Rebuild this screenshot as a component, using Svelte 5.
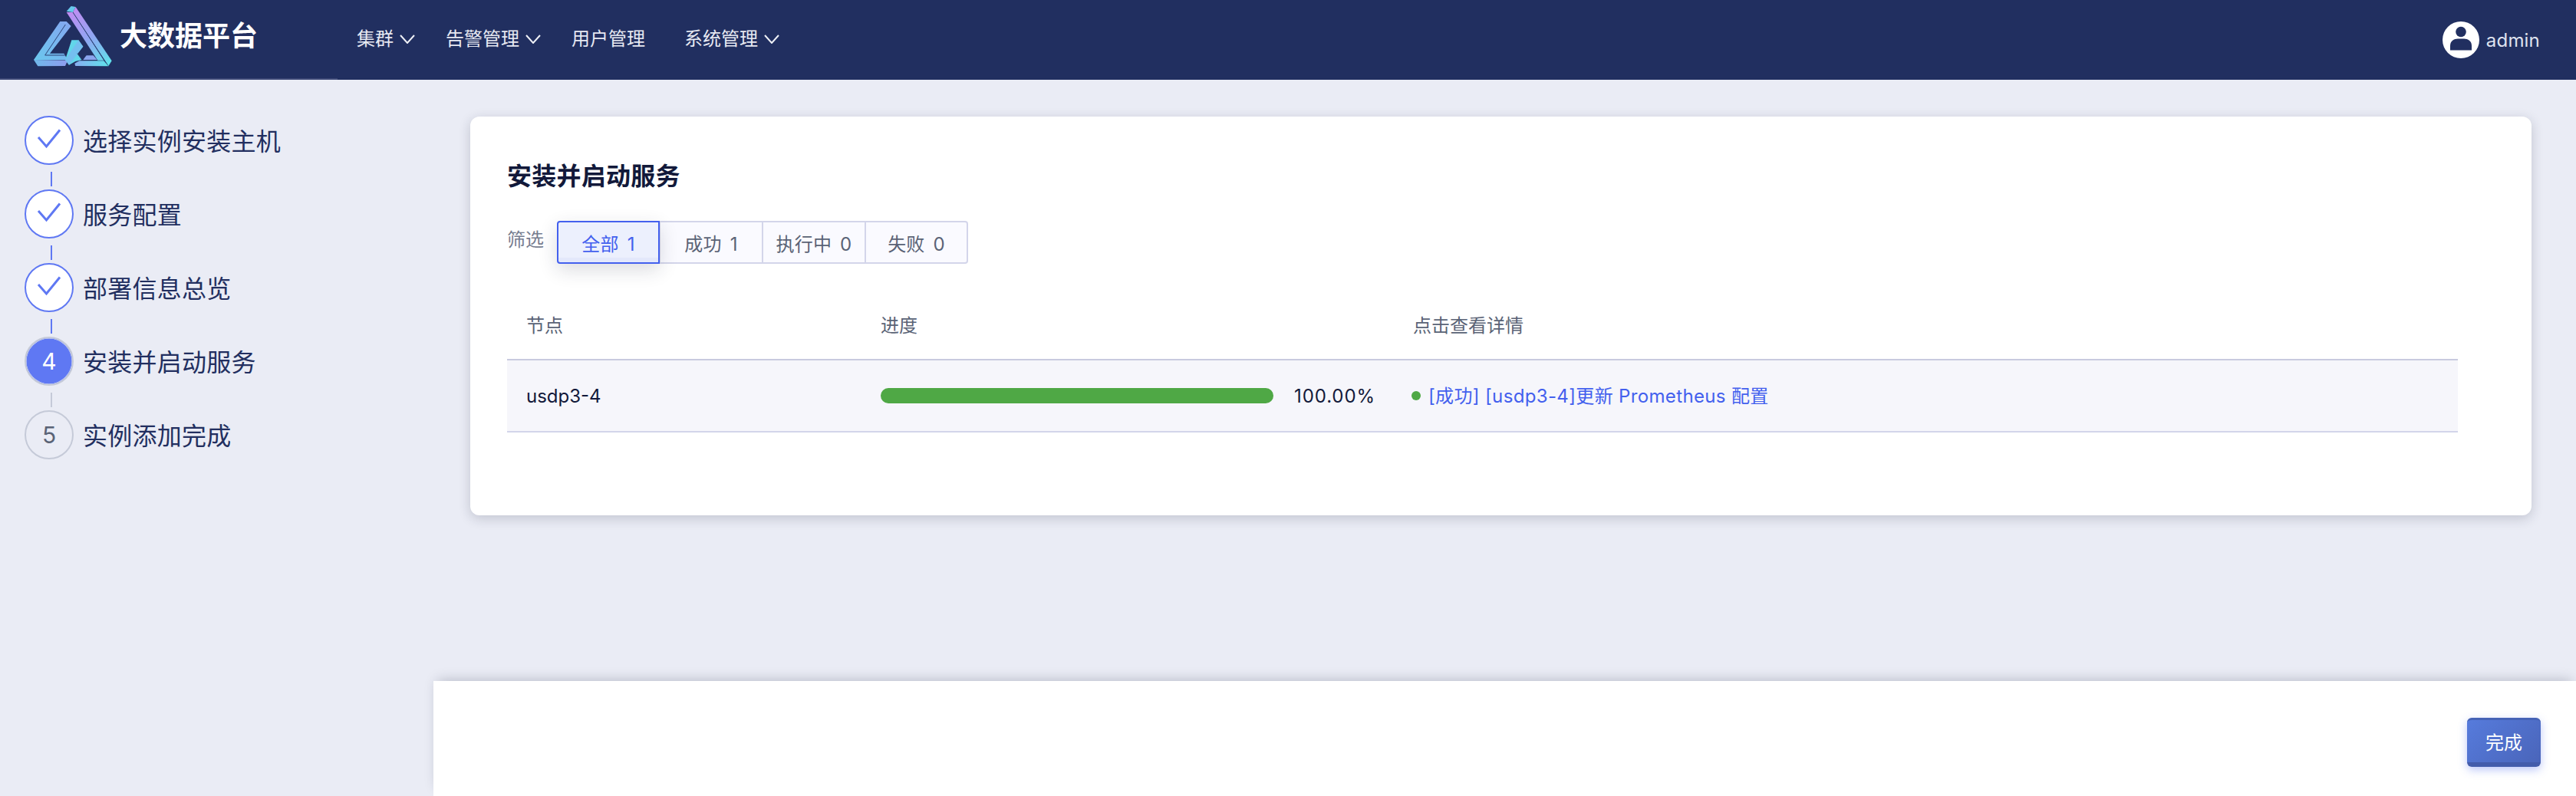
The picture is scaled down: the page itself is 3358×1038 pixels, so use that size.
<script>
  const steps = [
    { label: '选择实例安装主机', state: 'done' },
    { label: '服务配置', state: 'done' },
    { label: '部署信息总览', state: 'done' },
    { label: '安装并启动服务', state: 'current', n: 4 },
    { label: '实例添加完成', state: 'todo', n: 5 }
  ];
  const nav = [
    { label: '集群', caret: true },
    { label: '告警管理', caret: true },
    { label: '用户管理', caret: false },
    { label: '系统管理', caret: true }
  ];
  const filters = ['全部 1', '成功 1', '执行中 0', '失败 0'];
</script>

<div class="page">
  <header class="top">
    <div class="brand">
      <svg class="logo" viewBox="0 0 330 258" aria-hidden="true">
        <defs>
          <linearGradient id="g1" x1="170" y1="25" x2="310" y2="235" gradientUnits="userSpaceOnUse">
            <stop offset="0" stop-color="#c08df2" />
            <stop offset="0.5" stop-color="#90a6f2" />
            <stop offset="1" stop-color="#5fe2ea" />
          </linearGradient>
          <linearGradient id="g2" x1="150" y1="80" x2="20" y2="220" gradientUnits="userSpaceOnUse">
            <stop offset="0" stop-color="#83a8f0" />
            <stop offset="1" stop-color="#6bc6ee" />
          </linearGradient>
          <linearGradient id="g3" x1="15" y1="235" x2="145" y2="235" gradientUnits="userSpaceOnUse">
            <stop offset="0" stop-color="#6fb8ea" />
            <stop offset="1" stop-color="#8f9cf0" />
          </linearGradient>
          <linearGradient id="g4" x1="175" y1="235" x2="305" y2="235" gradientUnits="userSpaceOnUse">
            <stop offset="0" stop-color="#86aef0" />
            <stop offset="1" stop-color="#5fe2ea" />
          </linearGradient>
        </defs>
        <polygon points="140,32 158,12 176,15 165,36" fill="#67c9ec" />
        <polygon points="140,36 165,36 286,224 262,224" fill="url(#g1)" />
        <polygon points="165,36 176,15 317,226 304,247" fill="url(#g1)" />
        <polyline points="165,36 304,247" fill="none" stroke="#2c4377" stroke-width="3" />
        <polygon points="190,226 286,226 304,247 175,246 172,236" fill="url(#g4)" />
        <polygon points="218,205 245,205 260,222 205,222" fill="#8aa4ee" />
        <polygon points="115,72 140,72 158,90 75,197 130,197 145,223 12,222" fill="url(#g2)" />
        <polyline points="136,84 56,204 134,204" fill="none" stroke="#2c4377" stroke-width="3" />
        <polygon points="12,222 145,224 135,246 28,247" fill="url(#g3)" />
        <polygon points="160,145 187,145 205,170 182,197 200,222 175,228 150,242 135,222" fill="#62d6ea" />
        <polygon points="187,145 205,170 150,242 135,222" fill="#74bff0" />
        <polyline points="182,197 200,222" fill="none" stroke="#2c4377" stroke-width="2" />
      </svg>
      <span class="brand-name">大数据平台</span>
    </div>
    <nav class="nav">
      {#each nav as item}
        <span class="nav-item" class:plain={!item.caret}>
          {item.label}
          {#if item.caret}
            <svg class="caret" viewBox="0 0 20 12" aria-hidden="true">
              <polyline points="1,1 10,11 19,1" />
            </svg>
          {/if}
        </span>
      {/each}
    </nav>
    <div class="user">
      <svg class="avatar" viewBox="0 0 48 48" aria-hidden="true">
        <circle cx="24" cy="24" r="24" fill="#fff" />
        <circle cx="24" cy="13.5" r="6.8" fill="#212f60" />
        <path d="M10 37.5v-6c0-6 5-9 10-9h8c5 0 10 3 10 9v6z" fill="#212f60" />
      </svg>
      <span>admin</span>
    </div>
  </header>

  <div class="body">
    <aside class="side">
      {#each steps as s, i}
        <div class="step">
          <span class="circle {s.state}">
            {#if s.state === 'done'}
              <svg viewBox="0 0 60 60" class="check" aria-hidden="true">
                <polyline points="16,26 26.5,38 44,16.5" />
              </svg>
            {:else}
              {s.n}
            {/if}
          </span>
          <span class="step-label">{s.label}</span>
        </div>
        {#if i < steps.length - 1}
          <div class="connector" class:muted={s.state === 'current'}></div>
        {/if}
      {/each}
    </aside>

    <main class="main">
      <div class="scroll">
        <section class="card">
          <h2>安装并启动服务</h2>
          <div class="filter">
            <span class="filter-label">筛选</span>
            <div class="seg">
              {#each filters as f, i}
                <span class="seg-item" class:active={i === 0}>{f}</span>
              {/each}
            </div>
          </div>
          <div class="table">
            <div class="row head">
              <span class="c1">节点</span>
              <span>进度</span>
              <span>点击查看详情</span>
            </div>
            <div class="row data">
              <span class="c1">usdp3-4</span>
              <span class="progress">
                <span class="track"></span>
                <span class="pct">100.00%</span>
              </span>
              <span class="detail"><i class="dot"></i><span class="link">[成功] [usdp3-4]更新 Prometheus 配置</span></span>
            </div>
          </div>
        </section>
      </div>
      <footer class="foot">
        <button class="finish" type="button">完成</button>
      </footer>
    </main>
  </div>
</div>

<style>
  :global(body) {
    margin: 0;
    background: #eaecf5;
    font-family: Inter, "Noto Sans CJK SC", sans-serif;
  }
  .page {
    width: 3358px;
    height: 1038px;
    display: flex;
    flex-direction: column;
    overflow: hidden;
  }
  .top {
    height: 104px;
    flex: none;
    background: #212f60;
    display: flex;
    align-items: center;
    color: #e7e9f2;
    box-sizing: border-box;
  }
  .brand {
    width: 440px;
    height: 104px;
    flex: none;
    box-sizing: border-box;
    border-bottom: 2px solid #3d4877;
    display: flex;
    align-items: center;
    padding-left: 40px;
  }
  .logo {
    width: 110px;
    height: 86px;
    margin-top: -8px;
    flex: none;
  }
  .brand-name {
    margin-left: 6px;
    font-size: 36px;
    font-weight: 700;
    color: #fff;
    line-height: 48px;
    margin-top: -8px;
  }
  .nav {
    display: flex;
    align-items: center;
    margin-left: 25px;
    gap: 40px;
    font-size: 24px;
    margin-top: -2px;
  }
  .nav-item {
    display: flex;
    align-items: center;
    gap: 8px;
    line-height: 32px;
  }
  .nav-item.plain {
    margin-right: 11px;
  }
  .caret {
    width: 20px;
    height: 12px;
    fill: none;
    stroke: #eef0f6;
    stroke-width: 2;
  }
  .user {
    margin-left: auto;
    margin-right: 47px;
    display: flex;
    align-items: center;
    gap: 9px;
    font-size: 24px;
    letter-spacing: 0.2px;
    color: #dfe2ee;
  }
  .avatar {
    width: 48px;
    height: 48px;
  }
  .body {
    flex: 1;
    display: flex;
    min-height: 0;
  }
  .side {
    width: 565px;
    flex: none;
    box-sizing: border-box;
    padding: 47px 0 0 32px;
    display: flex;
    flex-direction: column;
  }
  .step {
    display: flex;
    align-items: center;
    height: 64px;
  }
  .circle {
    width: 64px;
    height: 64px;
    box-sizing: border-box;
    border-radius: 50%;
    display: flex;
    align-items: center;
    justify-content: center;
    font-size: 30px;
    flex: none;
  }
  .circle.done {
    background: #fff;
    border: 2px solid #5f78f3;
  }
  .check {
    width: 60px;
    height: 60px;
    flex: none;
    fill: none;
    stroke: #5f78f3;
    stroke-width: 3;
  }
  .circle.current {
    background: #5f78f3;
    color: #fff;
    border: 2px solid #c5cad8;
    box-shadow: inset 0 0 0 0.5px #eaecf5;
  }
  .circle.todo {
    border: 2px solid #c5cad8;
    color: #5a6376;
  }
  .step-label {
    margin-left: 12px;
    font-size: 32px;
    letter-spacing: 0.25px;
    color: #222f60;
    line-height: 44px;
    padding-top: 3px;
  }
  .connector {
    width: 2px;
    height: 19px;
    margin: 9px 0 4px 34px;
    background: #5f78f3;
  }
  .connector.muted {
    background: #c5cad8;
  }
  .main {
    flex: 1;
    min-width: 0;
    display: flex;
    flex-direction: column;
  }
  .scroll {
    flex: 1;
    min-height: 0;
    padding: 48px 58px 0 48px;
  }
  .card {
    background: #fff;
    border-radius: 12px;
    height: 520px;
    box-sizing: border-box;
    padding: 48px;
    box-shadow: 0 4px 16px rgba(30, 35, 60, 0.2);
  }
  h2 {
    margin: 0;
    font-size: 32px;
    letter-spacing: 0.25px;
    line-height: 60px;
    font-weight: 700;
    color: #12193a;
  }
  .filter {
    display: flex;
    margin-top: 28px;
    align-items: flex-start;
  }
  .filter-label {
    font-size: 24px;
    line-height: 50px;
    color: #767d8f;
    width: 65px;
    flex: none;
  }
  .seg {
    display: flex;
    height: 56px;
  }
  .seg-item {
    width: 134px;
    box-sizing: border-box;
    display: flex;
    align-items: center;
    justify-content: center;
    font-size: 24px;
    color: #5a6376;
    background: #fafaff;
    border: 2px solid #d3d5ea;
    border-left-width: 1px;
    border-right-width: 1px;
    white-space: pre;
    word-spacing: 4px;
    letter-spacing: 0.2px;
  }
  .seg-item:last-child {
    border-right-width: 2px;
    border-radius: 0 4px 4px 0;
  }
  .seg-item.active {
    position: relative;
    color: #4360ee;
    background: linear-gradient(#ecf0fd 88%, #e3e8fb 88%);
    border: 2px solid #4360ee;
    border-radius: 4px 0 0 4px;
    box-shadow: 0 8px 24px rgba(30, 35, 60, 0.16);
  }
  .table {
    margin-top: 32px;
    width: 2543px;
  }
  .row {
    display: grid;
    grid-template-columns: 487px 694px 1fr;
    align-items: center;
    font-size: 24px;
  }
  .head {
    height: 94px;
    box-sizing: border-box;
    color: #5a6376;
    border-bottom: 2px solid #c8cadf;
  }
  .data {
    height: 94px;
    box-sizing: border-box;
    background: #f6f6fb;
    color: #12193a;
    border-bottom: 2px solid #d3d5ea;
  }
  .c1 {
    padding-left: 25px;
  }
  .progress {
    display: flex;
    align-items: center;
  }
  .track {
    width: 512px;
    height: 20px;
    border-radius: 10px;
    background: #4fa845;
    flex: none;
  }
  .pct {
    margin-left: 27px;
    letter-spacing: 0.9px;
  }
  .detail {
    display: flex;
    align-items: center;
  }
  .dot {
    width: 12px;
    height: 12px;
    border-radius: 50%;
    background: #4fa845;
    margin-left: -2px;
    margin-right: 10px;
    flex: none;
  }
  .link {
    color: #4360ee;
    letter-spacing: 0.35px;
    padding-bottom: 3px;
  }
  .foot {
    height: 150px;
    flex: none;
    background: #fff;
    box-shadow: 0 -6px 16px -6px rgba(30, 35, 60, 0.28);
    display: flex;
    justify-content: flex-end;
    align-items: flex-start;
    padding: 48px 46px 0 0;
    box-sizing: border-box;
    position: relative;
  }
  .finish {
    width: 96px;
    height: 64px;
    box-sizing: border-box;
    border: none;
    border-top: 3px solid #4663b6;
    border-bottom: 6px solid #435cab;
    border-radius: 6px;
    background: linear-gradient(135deg, #567bdc, #4a65ba);
    color: #fff;
    font-family: inherit;
    font-size: 24px;
    padding: 0;
    box-shadow: 0 4px 12px rgba(67, 96, 238, 0.35);
  }
</style>
